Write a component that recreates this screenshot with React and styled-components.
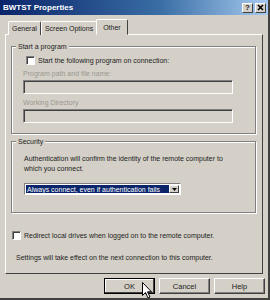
import React from "react";
import styled, { createGlobalStyle } from "styled-components";

const Global = createGlobalStyle`
  html, body { margin: 0; padding: 0; background: #d4d0c8; }
  body { font-family: "Liberation Sans", Arial, sans-serif; }
`;

function Properties() {
  return (
    <Window>
      <TitleBar>
        <Title>BWTST Properties</Title>
        <TitleButtons>
          <CapButton>?</CapButton>
          <CapButton>
            <svg width="7" height="7" viewBox="0 0 7 7">
              <path d="M1 1 L6 6 M6 1 L1 6" stroke="#000" strokeWidth="1.6" />
            </svg>
          </CapButton>
        </TitleButtons>
      </TitleBar>
      <Body>
        <TabStrip>
          <Tab>General</Tab>
          <Tab>Screen Options</Tab>
          <Tab active>Other</Tab>
        </TabStrip>
        <Panel>
          <Group height={88}>
            <Legend>Start a program</Legend>
            <CheckRow>
              <Check />
              <span>Start the following program on connection:</span>
            </CheckRow>
            <Field>
              <Dim>Program path and file name:</Dim>
              <TextBox />
            </Field>
            <Field>
              <Dim>Working Directory</Dim>
              <TextBox />
            </Field>
          </Group>
          <Group height={72}>
            <Legend>Security</Legend>
            <Para>
              Authentication will confirm the identity of the remote computer to
              <br />
              which you connect.
            </Para>
            <Select>
              <SelectText>Always connect, even if authentication fails</SelectText>
              <ArrowBtn>
                <svg width="5" height="3" viewBox="0 0 5 3">
                  <path d="M0 0 H5 L2.5 3 Z" fill="#000" />
                </svg>
              </ArrowBtn>
            </Select>
          </Group>
          <LooseRow>
            <Check />
            <span>Redirect local drives when logged on to the remote computer.</span>
          </LooseRow>
          <Note>Settings will take effect on the next connection to this computer.</Note>
        </Panel>
        <ButtonRow>
          <Button focused>
            OK
            <Cursor width="11" height="17" viewBox="0 0 11 17">
              <path
                d="M0.5 0.5 V13.5 L3.5 10.5 L6 16 L8 15 L5.5 9.8 L9.5 9.8 Z"
                fill="#fff"
                stroke="#000"
                strokeWidth="1"
              />
            </Cursor>
          </Button>
          <Button>Cancel</Button>
          <Button>Help</Button>
        </ButtonRow>
      </Body>
    </Window>
  );
}

export default function App() {
  return (
    <>
      <Global />
      <Properties />
    </>
  );
}

const Window = styled.div`
  width: 270px;
  height: 300px;
  box-sizing: border-box;
  display: flex;
  flex-direction: column;
  background: #d4d0c8;
  border-right: 2px solid #404040;
  border-bottom: 2px solid #404040;
  font-size: 7px;
  color: #222;
  overflow: hidden;
`;

const TitleBar = styled.div`
  height: 15px;
  flex: none;
  display: flex;
  align-items: center;
  justify-content: space-between;
  padding: 0 2px 0 3px;
  background: linear-gradient(to right, #0a246a 0%, #3a6ea5 60%, #a6caf0 100%);
`;

const Title = styled.div`
  color: #fff;
  font-weight: bold;
  font-size: 8px;
`;

const TitleButtons = styled.div`
  display: flex;
  gap: 2px;
`;

const CapButton = styled.div`
  width: 11px;
  height: 10px;
  box-sizing: border-box;
  display: flex;
  align-items: center;
  justify-content: center;
  background: #d4d0c8;
  border: 1px solid;
  border-color: #fff #404040 #404040 #fff;
  font-weight: bold;
  font-size: 8px;
  line-height: 1;
`;

const Body = styled.div`
  flex: 1;
  display: flex;
  flex-direction: column;
  padding: 4px 3px 0 5px;
`;

const TabStrip = styled.div`
  display: flex;
  align-items: flex-end;
  height: 16px;
  padding-left: 3px;
  margin-bottom: -1px;
  position: relative;
  z-index: 1;
`;

const Tab = styled.div`
  box-sizing: border-box;
  height: ${(p) => (p.active ? "16px" : "14px")};
  padding: 0 ${(p) => (p.active ? "6px" : "3px")};
  margin: 0 ${(p) => (p.active ? "-1px" : "0")};
  display: flex;
  align-items: center;
  background: #d4d0c8;
  border: 1px solid;
  border-color: #fff #404040 transparent #fff;
  border-bottom: ${(p) => (p.active ? "1px solid #d4d0c8" : "none")};
  border-radius: 2px 2px 0 0;
  font-size: 7px;
`;

const Panel = styled.div`
  box-sizing: border-box;
  width: 258px;
  height: 240px;
  display: flex;
  flex-direction: column;
  padding: 11px 6px 0 5px;
  border: 1px solid;
  border-color: #fff #404040 #404040 #fff;
`;

const Group = styled.div`
  position: relative;
  box-sizing: border-box;
  height: ${(p) => p.height}px;
  margin-bottom: 7px;
  padding: 8px 8px 0 14px;
  border: 1px solid #808080;
  box-shadow: 1px 1px 0 #fff, inset 1px 1px 0 #fff;
`;

const Legend = styled.div`
  position: absolute;
  top: -5px;
  left: 4px;
  padding: 0 2px;
  background: #d4d0c8;
  line-height: 9px;
`;

const CheckRow = styled.div`
  display: flex;
  align-items: center;
  gap: 3px;
  height: 10px;
`;

const LooseRow = styled(CheckRow)`
  margin: 10px 0 0 1px;
`;

const Check = styled.span`
  width: 9px;
  height: 9px;
  box-sizing: border-box;
  background: #fff;
  border: 1px solid;
  border-color: #808080 #fff #fff #808080;
  box-shadow: inset 1px 1px 0 #404040;
  flex: none;
`;

const Field = styled.div`
  display: flex;
  flex-direction: column;
  gap: 2px;
  margin: 4px 0 0 -3px;
  line-height: 9px;
`;

const Dim = styled.span`
  color: #9a978f;
`;

const TextBox = styled.div`
  box-sizing: border-box;
  width: 210px;
  height: 14px;
  border: 1px solid;
  border-color: #808080 #fff #fff #808080;
  box-shadow: inset 1px 1px 0 #404040;
`;

const Para = styled.p`
  margin: 4px 0 0 -2px;
  line-height: 10px;
`;

const Select = styled.div`
  box-sizing: border-box;
  width: 157px;
  height: 12px;
  margin: 9px 0 0 -2px;
  display: flex;
  align-items: stretch;
  background: #fff;
  border: 1px solid;
  border-color: #808080 #fff #fff #808080;
  padding: 1px;
`;

const SelectText = styled.div`
  flex: 1;
  display: flex;
  align-items: center;
  background: #0a246a;
  color: #fff;
  padding-left: 1px;
  white-space: nowrap;
  overflow: hidden;
`;

const ArrowBtn = styled.div`
  width: 10px;
  box-sizing: border-box;
  display: flex;
  align-items: center;
  justify-content: center;
  background: #d4d0c8;
  border: 1px solid;
  border-color: #fff #404040 #404040 #fff;
`;

const Note = styled.div`
  margin: 14px 0 0 5px;
`;

const ButtonRow = styled.div`
  display: flex;
  justify-content: flex-end;
  gap: 4px;
  padding: 4px 0 0 0;
`;

const Button = styled.div`
  position: relative;
  box-sizing: border-box;
  width: 51px;
  height: 16px;
  display: flex;
  align-items: center;
  justify-content: center;
  background: #d4d0c8;
  border: 1px solid;
  border-color: ${(p) => (p.focused ? "#000" : "#fff #404040 #404040 #fff")};
  box-shadow: ${(p) =>
    p.focused
      ? "inset -1px -1px 0 #404040, inset 1px 1px 0 #fff"
      : "inset -1px -1px 0 #808080"};
  font-size: 7.5px;
`;

const Cursor = styled.svg`
  position: absolute;
  left: 37px;
  top: 3px;
`;
